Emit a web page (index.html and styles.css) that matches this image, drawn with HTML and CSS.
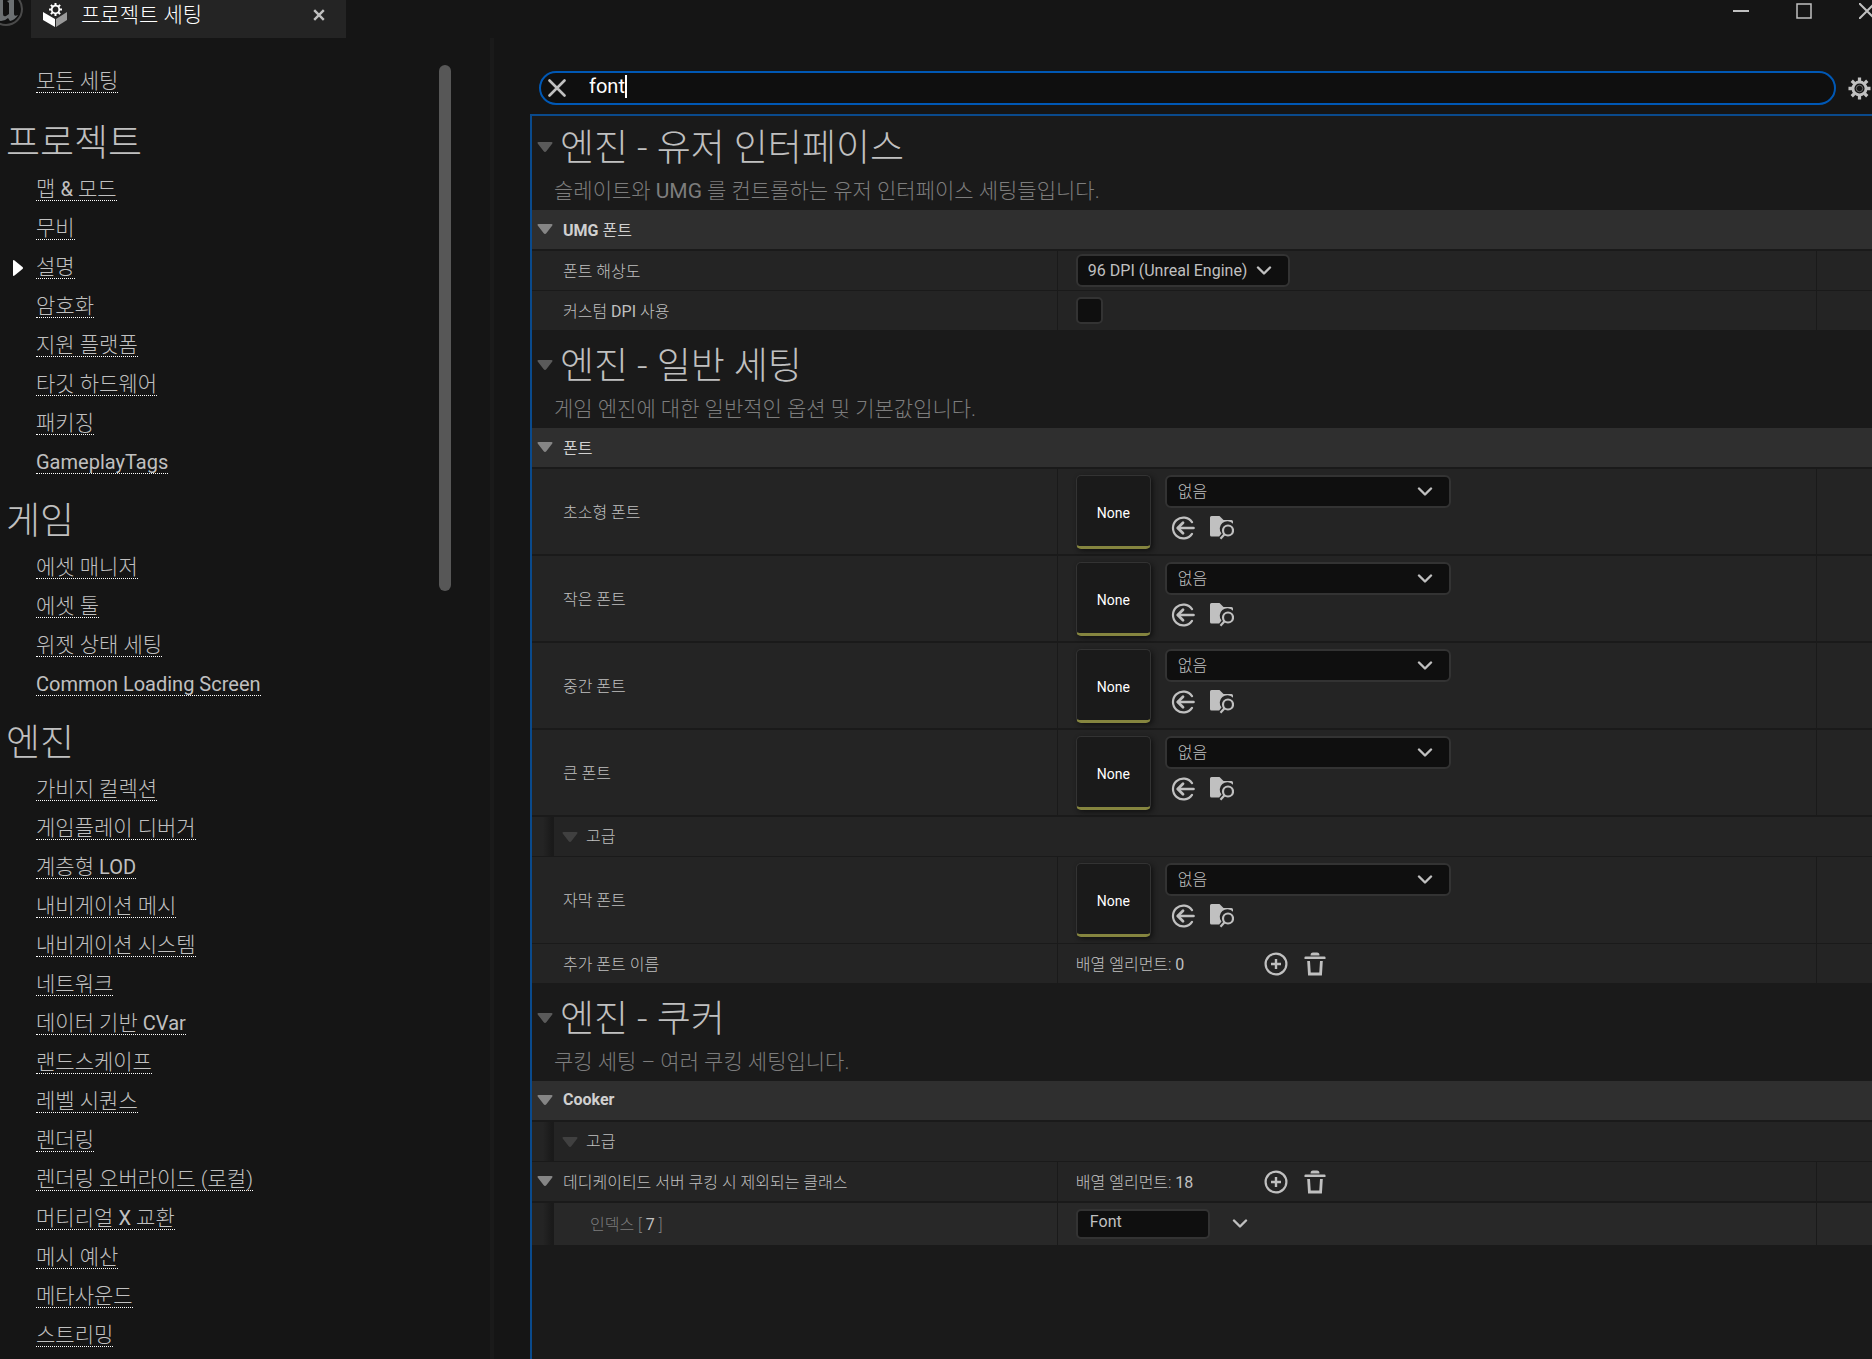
FILE: index.html
```html
<!doctype html>
<html lang="ko">
<head>
  <meta charset="utf-8">
  <title>프로젝트 세팅</title>
  <link rel="stylesheet" href="styles.css">
</head>
<body>
<svg class="symbols" aria-hidden="true">
  <symbol id="tri-down" viewBox="0 0 16 10"><path d="M1.5 0h13q1.5 0 .8 1.4L9.5 9q-1.5 2-3 0L.7 1.4Q0 0 1.5 0z" fill="currentColor"/></symbol>
  <symbol id="chevron" viewBox="0 0 16 10"><path d="M2 1.5l6 6 6-6" fill="none" stroke="currentColor" stroke-width="2.4" stroke-linecap="round" stroke-linejoin="round"/></symbol>
  <symbol id="use-selected" viewBox="0 0 24 24"><g fill="none" stroke="currentColor" stroke-width="2.2" stroke-linecap="round"><path d="M21 6.2A10.4 10.4 0 1 0 21 17.8"/><path d="M7 12h15.5" stroke-width="2.6"/><path d="M12 6.8L6.8 12l5.2 5.2" stroke-width="2.8" stroke-linejoin="round"/></g></symbol>
  <symbol id="browse" viewBox="0 0 24 24"><path d="M0 1.500Q0 0 1.500 0H9.500L13.500 4H21.500Q23 4 23 5.500V7.800A7.300 7.300 0 0 0 11.500 17.500L9.200 20.500H1.500Q0 20.500 0 19z" fill="currentColor"/><circle cx="18" cy="14.500" r="5" fill="none" stroke="currentColor" stroke-width="2.200"/><path d="M14.500 18.300L10.500 22.800" stroke="currentColor" stroke-width="2.200"/></symbol>
  <symbol id="add" viewBox="0 0 24 24"><circle cx="12" cy="12" r="10.400" fill="none" stroke="currentColor" stroke-width="2.200"/><path d="M12 7v10M7 12h10" stroke="currentColor" stroke-width="2.400"/></symbol>
  <symbol id="trash" viewBox="0 0 24 24"><path d="M1.500 5.500Q1.500 4.500 2.500 4.500H21.500Q22.500 4.500 22.500 5.500V7H1.500z" fill="currentColor"/><path d="M7.500 3.500Q7.500.5 10 .5h4Q16.500.5 16.500 3.500z" fill="currentColor"/><path d="M5.600 9L6.400 22H17.600L18.400 9" fill="none" stroke="currentColor" stroke-width="2.800"/></symbol>
  <symbol id="gear" viewBox="0 0 24 24"><circle cx="12" cy="12" r="6.800" fill="none" stroke="currentColor" stroke-width="3"/><circle cx="12" cy="12" r="3.400" fill="none" stroke="currentColor" stroke-width="1" opacity=".5"/><g stroke="currentColor" stroke-width="3.400"><path d="M12 .5v4M12 19.500v4M.5 12h4M19.500 12h4M3.900 3.900l2.800 2.800M17.300 17.300l2.800 2.800M20.100 3.900l-2.800 2.800M6.700 17.300l-2.800 2.800"/></g></symbol>
</svg>

<header class="titlebar">
  <svg class="logo" viewBox="0 0 34 34" aria-hidden="true">
    <circle cx="17" cy="17" r="16" fill="#111" stroke="#4a4a4a" stroke-width="2"/>
    <path d="M5 13q4-6 9-7v16q0 3 3 2l3-2V11l-2-2q4-1 7-4v17q0 3 4 1-3 5-8 6l-2-3q-3 3-7 3-4-1-4-6V13q-1-2-3 0z" fill="#6c7072"/>
  </svg>
  <div class="tab">
    <svg class="tab-icon" viewBox="0 0 24 24" aria-hidden="true">
      <path d="M0 9l12 7v8L0 17z" fill="#fff"/>
      <path d="M24 9l-11 7v8l11-7z" fill="#999"/>
      <circle cx="12.500" cy="6.500" r="3.800" fill="none" stroke="#fff" stroke-width="1.800"/>
      <path d="M12.500 0v2.500M12.500 10.500V13M6 6.500h2.500M16.500 6.500H19M7.900 1.900l1.800 1.800M15.300 9.300l1.800 1.800M17.100 1.900l-1.800 1.800M9.700 9.300l-1.800 1.800" stroke="#fff" stroke-width="2"/>
    </svg>
    <span class="tab-title">프로젝트 세팅</span>
    <button class="icon-btn" aria-label="탭 닫기"><svg width="12" height="12" viewBox="0 0 10 10"><path d="M1 1l8 8M9 1L1 9" stroke="currentColor" stroke-width="2"/></svg></button>
  </div>
  <div class="window-buttons">
    <button class="icon-btn" aria-label="최소화"><svg width="16" height="16" viewBox="0 0 16 16"><path d="M0 8h16" stroke="currentColor" stroke-width="2"/></svg></button>
    <button class="icon-btn" aria-label="최대화"><svg width="16" height="16" viewBox="0 0 16 16"><path d="M1 1h14v14H1z" fill="none" stroke="currentColor" stroke-width="1.500"/></svg></button>
    <button class="icon-btn" aria-label="닫기"><svg width="16" height="16" viewBox="0 0 16 16"><path d="M0 0l16 16M16 0L0 16" stroke="currentColor" stroke-width="2"/></svg></button>
  </div>
</header>

<div class="main">
  <nav class="sidebar">
    <div class="nav-list">
      <ul class="nav-top">
        <li><a href="#">모든 세팅</a></li>
      </ul>
      <h2>프로젝트</h2>
      <ul>
        <li><a href="#">맵 <span lang="en">&amp;</span> 모드</a></li>
        <li><a href="#">무비</a></li>
        <li class="current"><svg class="marker" viewBox="0 0 10 16" aria-hidden="true"><path d="M0 1q0-1.500 1.500-.5L9.500 7q1 1 0 2l-8 6.500Q0 16.500 0 15z" fill="#fff"/></svg><a href="#">설명</a></li>
        <li><a href="#">암호화</a></li>
        <li><a href="#">지원 플랫폼</a></li>
        <li><a href="#">타깃 하드웨어</a></li>
        <li><a href="#">패키징</a></li>
        <li><a href="#" lang="en">GameplayTags</a></li>
      </ul>
      <h2>게임</h2>
      <ul>
        <li><a href="#">에셋 매니저</a></li>
        <li><a href="#">에셋 툴</a></li>
        <li><a href="#">위젯 상태 세팅</a></li>
        <li><a href="#" lang="en">Common Loading Screen</a></li>
      </ul>
      <h2>엔진</h2>
      <ul>
        <li><a href="#">가비지 컬렉션</a></li>
        <li><a href="#">게임플레이 디버거</a></li>
        <li><a href="#">계층형 <span lang="en">LOD</span></a></li>
        <li><a href="#">내비게이션 메시</a></li>
        <li><a href="#">내비게이션 시스템</a></li>
        <li><a href="#">네트워크</a></li>
        <li><a href="#">데이터 기반 <span lang="en">CVar</span></a></li>
        <li><a href="#">랜드스케이프</a></li>
        <li><a href="#">레벨 시퀀스</a></li>
        <li><a href="#">렌더링</a></li>
        <li><a href="#">렌더링 오버라이드 (로컬)</a></li>
        <li><a href="#">머티리얼 <span lang="en">X</span> 교환</a></li>
        <li><a href="#">메시 예산</a></li>
        <li><a href="#">메타사운드</a></li>
        <li><a href="#">스트리밍</a></li>
      </ul>
    </div>
    <div class="scrollbar"><div class="thumb"></div></div>
  </nav>

  <main class="content">
    <div class="search-row">
      <div class="search">
        <button class="icon-btn clear" aria-label="검색어 지우기"><svg width="18" height="18" viewBox="0 0 18 18"><path d="M1.500 1.500l15 15M16.500 1.500l-15 15" stroke="currentColor" stroke-width="2.600" stroke-linecap="round"/></svg></button>
        <input class="search-input" type="text" value="font" aria-label="검색">
        <span class="caret"></span>
      </div>
      <button class="icon-btn" aria-label="옵션"><svg width="23" height="23"><use href="#gear"/></svg></button>
    </div>

    <div class="panel">
      <section>
        <div class="section-head">
          <h1><svg class="tri mid"><use href="#tri-down"/></svg>엔진 - 유저 인터페이스</h1>
          <p>슬레이트와 <span lang="en">UMG</span> 를 컨트롤하는 유저 인터페이스 세팅들입니다.</p>
        </div>
        <h3 class="category"><svg class="tri"><use href="#tri-down"/></svg><span><b>UMG</b> 폰트</span></h3>
        <div class="row">
          <label class="name" for="dpi">폰트 해상도</label>
          <div class="value">
            <div class="combo combo-dpi">
              <select id="dpi"><option>96 DPI (Unreal Engine)</option></select>
              <svg class="chevron"><use href="#chevron"/></svg>
            </div>
          </div>
          <div class="reset"></div>
        </div>
        <div class="row">
          <label class="name" for="custom-dpi"><span>커스텀 <span lang="en">DPI</span> 사용</span></label>
          <div class="value"><input class="check" type="checkbox" id="custom-dpi"></div>
          <div class="reset"></div>
        </div>
      </section>

      <section>
        <div class="section-head">
          <h1><svg class="tri mid"><use href="#tri-down"/></svg>엔진 - 일반 세팅</h1>
          <p>게임 엔진에 대한 일반적인 옵션 및 기본값입니다.</p>
        </div>
        <h3 class="category"><svg class="tri"><use href="#tri-down"/></svg>폰트</h3>
        <div class="row asset">
          <label class="name" for="font-tiny">초소형 폰트</label>
          <div class="value">
            <div class="thumbnail">None</div>
            <div class="picker">
              <div class="combo">
                <select id="font-tiny"><option>없음</option></select>
                <svg class="chevron"><use href="#chevron"/></svg>
              </div>
              <div class="picker-buttons">
                <button class="icon-btn" aria-label="선택 항목 사용"><svg><use href="#use-selected"/></svg></button>
                <button class="icon-btn" aria-label="찾아보기"><svg><use href="#browse"/></svg></button>
              </div>
            </div>
          </div>
          <div class="reset"></div>
        </div>
        <div class="row asset">
          <label class="name" for="font-small">작은 폰트</label>
          <div class="value">
            <div class="thumbnail">None</div>
            <div class="picker">
              <div class="combo">
                <select id="font-small"><option>없음</option></select>
                <svg class="chevron"><use href="#chevron"/></svg>
              </div>
              <div class="picker-buttons">
                <button class="icon-btn" aria-label="선택 항목 사용"><svg><use href="#use-selected"/></svg></button>
                <button class="icon-btn" aria-label="찾아보기"><svg><use href="#browse"/></svg></button>
              </div>
            </div>
          </div>
          <div class="reset"></div>
        </div>
        <div class="row asset">
          <label class="name" for="font-medium">중간 폰트</label>
          <div class="value">
            <div class="thumbnail">None</div>
            <div class="picker">
              <div class="combo">
                <select id="font-medium"><option>없음</option></select>
                <svg class="chevron"><use href="#chevron"/></svg>
              </div>
              <div class="picker-buttons">
                <button class="icon-btn" aria-label="선택 항목 사용"><svg><use href="#use-selected"/></svg></button>
                <button class="icon-btn" aria-label="찾아보기"><svg><use href="#browse"/></svg></button>
              </div>
            </div>
          </div>
          <div class="reset"></div>
        </div>
        <div class="row asset">
          <label class="name" for="font-large">큰 폰트</label>
          <div class="value">
            <div class="thumbnail">None</div>
            <div class="picker">
              <div class="combo">
                <select id="font-large"><option>없음</option></select>
                <svg class="chevron"><use href="#chevron"/></svg>
              </div>
              <div class="picker-buttons">
                <button class="icon-btn" aria-label="선택 항목 사용"><svg><use href="#use-selected"/></svg></button>
                <button class="icon-btn" aria-label="찾아보기"><svg><use href="#browse"/></svg></button>
              </div>
            </div>
          </div>
          <div class="reset"></div>
        </div>
        <h4 class="advanced"><span class="indent"></span><svg class="tri dim"><use href="#tri-down"/></svg>고급</h4>
        <div class="row asset last-asset">
          <label class="name" for="font-subtitle">자막 폰트</label>
          <div class="value">
            <div class="thumbnail">None</div>
            <div class="picker">
              <div class="combo">
                <select id="font-subtitle"><option>없음</option></select>
                <svg class="chevron"><use href="#chevron"/></svg>
              </div>
              <div class="picker-buttons">
                <button class="icon-btn" aria-label="선택 항목 사용"><svg><use href="#use-selected"/></svg></button>
                <button class="icon-btn" aria-label="찾아보기"><svg><use href="#browse"/></svg></button>
              </div>
            </div>
          </div>
          <div class="reset"></div>
        </div>
        <div class="row">
          <div class="name">추가 폰트 이름</div>
          <div class="value">
            <span class="count">배열 엘리먼트: <span lang="en">0</span></span>
            <button class="icon-btn" aria-label="엘리먼트 추가"><svg><use href="#add"/></svg></button>
            <button class="icon-btn" aria-label="모두 제거"><svg><use href="#trash"/></svg></button>
          </div>
          <div class="reset"></div>
        </div>
      </section>

      <section>
        <div class="section-head">
          <h1><svg class="tri mid"><use href="#tri-down"/></svg>엔진 - 쿠커</h1>
          <p>쿠킹 세팅 – 여러 쿠킹 세팅입니다.</p>
        </div>
        <h3 class="category"><svg class="tri"><use href="#tri-down"/></svg><b>Cooker</b></h3>
        <h4 class="advanced"><span class="indent"></span><svg class="tri dim"><use href="#tri-down"/></svg>고급</h4>
        <div class="row parent">
          <div class="name expandable"><svg class="tri"><use href="#tri-down"/></svg>데디케이티드 서버 쿠킹 시 제외되는 클래스</div>
          <div class="value">
            <span class="count">배열 엘리먼트: <span lang="en">18</span></span>
            <button class="icon-btn" aria-label="엘리먼트 추가"><svg><use href="#add"/></svg></button>
            <button class="icon-btn" aria-label="모두 제거"><svg><use href="#trash"/></svg></button>
          </div>
          <div class="reset"></div>
        </div>
        <div class="row child">
          <label class="name" for="class-7"><span class="indent"></span><span class="index">인덱스 [ <span class="number" lang="en">7</span> ]</span></label>
          <div class="value">
            <input class="text-input" type="text" id="class-7" value="Font">
            <button class="icon-btn" aria-label="클래스 목록"><svg class="chevron"><use href="#chevron"/></svg></button>
          </div>
          <div class="reset"></div>
        </div>
      </section>
    </div>
  </main>
</div>
</body>
</html>
```
FILE: styles.css
```css
* {
  box-sizing: border-box;
}
body {
  margin: 0;
  height: 100vh;
  display: flex;
  flex-direction: column;
  overflow: hidden;
  background: #151515;
  color: #c0c0c0;
  font-family: Roboto, "Noto Sans CJK KR", sans-serif;
  font-size: 16px;
  font-weight: 300;
}
h1, h2, h3, h4, p, ul {
  margin: 0;
  padding: 0;
  font-weight: 300;
}
[lang=en] {
  font-weight: 400;
}
input, select, button {
  font: inherit;
  color: inherit;
}
.symbols {
  display: none;
}
.icon-btn {
  display: flex;
  padding: 0;
  border: 0;
  background: none;
}

/* Title bar */
.titlebar {
  display: flex;
  flex: none;
  height: 38px;
  overflow: hidden;
}
.logo {
  width: 34px;
  height: 34px;
  margin: -8px 8px 0 -11px;
}
.tab {
  display: flex;
  align-items: center;
  width: 315px;
  padding: 0 21px 8px 12px;
  background: #242424;
  color: #fff;
}
.tab-icon {
  width: 24px;
  height: 24px;
  margin-right: 14px;
}
.tab-title {
  flex: 1;
  font-size: 21px;
  line-height: 30px;
}
.tab .icon-btn {
  color: #c0c0c0;
}
.window-buttons {
  display: flex;
  gap: 47px;
  align-items: flex-start;
  margin: 3px -3px 0 auto;
}

.main {
  display: flex;
  flex: 1;
  min-height: 0;
}

/* Sidebar */
.sidebar {
  display: flex;
  flex: none;
  width: 494px;
  padding: 24px 39px 0 6px;
  border-right: 4px solid #1a1a1a;
  overflow: hidden;
}
.nav-list {
  flex: 1;
}
.nav-list ul {
  list-style: none;
}
.nav-list li {
  display: flex;
  align-items: center;
  height: 39px;
  padding-left: 30px;
}
.nav-list .nav-top {
  margin-bottom: 3px;
}
.nav-list a {
  color: inherit;
  font-size: 21px;
  line-height: 22px;
  text-decoration: none;
  border-bottom: 1px dotted #fff;
}
.nav-list [lang=en] {
  font-size: 20px;
}
.nav-list h2 {
  padding-top: 13px;
  font-size: 37px;
  line-height: 53px;
}
.nav-list .current {
  padding-left: 7px;
}
.marker {
  width: 10px;
  height: 16px;
  margin-right: 13px;
}
.scrollbar {
  width: 12px;
  padding-top: 3px;
}
.thumb {
  height: 526px;
  border-radius: 6px;
  background: #575757;
}

/* Search */
.content {
  display: flex;
  flex: 1;
  flex-direction: column;
  min-width: 0;
  padding: 33px 0 0 36px;
}
.search-row {
  display: flex;
  align-items: center;
  gap: 12px;
  padding: 0 1px 0 9px;
}
.search {
  display: flex;
  flex: 1;
  align-items: center;
  height: 34px;
  padding: 0 7px;
  border: 2px solid #0058b5;
  border-radius: 17px;
  background: #0f0f0f;
}
.clear {
  margin-right: 23px;
}
.search-input {
  field-sizing: content;
  padding: 0;
  border: 0;
  outline: 0;
  background: none;
  color: #fff;
  font-size: 20px;
  font-weight: 400;
  line-height: 24px;
  margin-bottom: 4px;
}
.caret {
  width: 2px;
  height: 23px;
  margin-bottom: 3px;
  background: #fff;
}

/* Details panel */
.panel {
  flex: 1;
  margin-top: 9px;
  border: solid #0a4a8c;
  border-width: 2px 0 0 2px;
  background: #1a1a1a;
}
.section-head {
  height: 98px;
  padding-top: 15px;
}
section:first-child .section-head {
  height: 94px;
  padding-top: 11px;
}
.section-head h1 {
  display: flex;
  align-items: center;
  gap: 7px;
  padding-left: 5px;
  font-size: 37px;
  line-height: 44px;
}
.section-head h1 .tri {
  margin-bottom: 4px;
}
.section-head p {
  padding: 8px 0 0 22px;
  color: #7d7d7d;
  font-size: 21px;
  line-height: 24px;
}
.tri {
  flex: none;
  width: 16px;
  height: 10px;
  color: #858585;
}
.tri.mid {
  color: #5a5a5a;
}
.tri.dim {
  color: #404040;
}
.category {
  display: flex;
  align-items: center;
  gap: 10px;
  height: 39px;
  margin-bottom: 2px;
  padding: 0 0 2px 5px;
  background: #2f2f2f;
  color: #d0d0d0;
  font-size: 16px;
  font-weight: 400;
}
.row {
  display: grid;
  grid-template-columns: 9fr 13fr 55px;
  gap: 1px;
  min-height: 39px;
  margin-bottom: 1px;
}
.row > * {
  display: flex;
  align-items: center;
  background: #242424;
}
.row.asset {
  min-height: 85px;
  margin-bottom: 2px;
}
.row.last-asset {
  min-height: 86px;
  margin-bottom: 1px;
}
.row.parent {
  margin-bottom: 2px;
}
.row.child {
  min-height: 42px;
}
.row.child > * {
  background: #282828;
}
section > .row:last-child {
  margin-bottom: 0;
}
.name {
  padding: 0 0 2px 31px;
}
.expandable {
  gap: 10px;
  padding-left: 5px;
}
.value {
  padding-left: 18px;
}
.asset .value {
  align-items: flex-start;
  padding-top: 6px;
}
.advanced {
  display: flex;
  align-items: center;
  gap: 8px;
  height: 39px;
  margin-bottom: 1px;
  background: #242424;
  line-height: 24px;
}
.indent {
  align-self: stretch;
  width: 22px;
  background: linear-gradient(to right, #242424 50%, #1a1a1a 90%);
}
.child .name {
  gap: 36px;
  padding: 0;
}
.index {
  padding-bottom: 2px;
  color: #7d7d7d;
}
.number {
  color: #c0c0c0;
}

/* Controls */
.combo {
  display: grid;
  align-items: center;
  width: 286px;
  height: 33px;
}
.combo-dpi {
  width: 214px;
}
.combo select {
  grid-area: 1 / 1;
  width: 100%;
  height: 33px;
  padding: 0 11px;
  appearance: none;
  border: 2px solid #333;
  border-radius: 6px;
  background: #0f0f0f;
}
.combo-dpi select {
  padding: 0 10px;
  font-weight: 400;
}
.combo .chevron {
  grid-area: 1 / 1;
  justify-self: end;
  margin-right: 18px;
  pointer-events: none;
}
.chevron {
  width: 16px;
  height: 10px;
}
.check {
  width: 27px;
  height: 27px;
  margin: 0;
  appearance: none;
  border: 2px solid #333;
  border-radius: 5px;
  background: #0f0f0f;
}
.thumbnail {
  display: flex;
  align-items: center;
  justify-content: center;
  width: 75px;
  height: 74px;
  margin-right: 14px;
  padding-top: 3px;
  border: 1px solid #333;
  border-bottom: 3px solid #85853f;
  border-radius: 5px;
  background: #1a1a1a;
  box-shadow: 2px 2px 5px #111;
  color: #fff;
  font-size: 14px;
  font-weight: 400;
}
.picker-buttons {
  display: flex;
  gap: 15px;
  padding: 8px 0 0 6px;
}
.value .icon-btn svg {
  width: 24px;
  height: 24px;
}
.value .icon-btn .chevron {
  width: 16px;
  height: 10px;
}
.count {
  width: 188px;
  padding-bottom: 2px;
}
.count + .icon-btn {
  margin-right: 15px;
}
.text-input {
  width: 134px;
  height: 30px;
  margin-right: 22px;
  padding: 0 12px 5px;
  border: 2px solid #333;
  border-radius: 5px;
  background: #0f0f0f;
  font-weight: 400;
}
```
